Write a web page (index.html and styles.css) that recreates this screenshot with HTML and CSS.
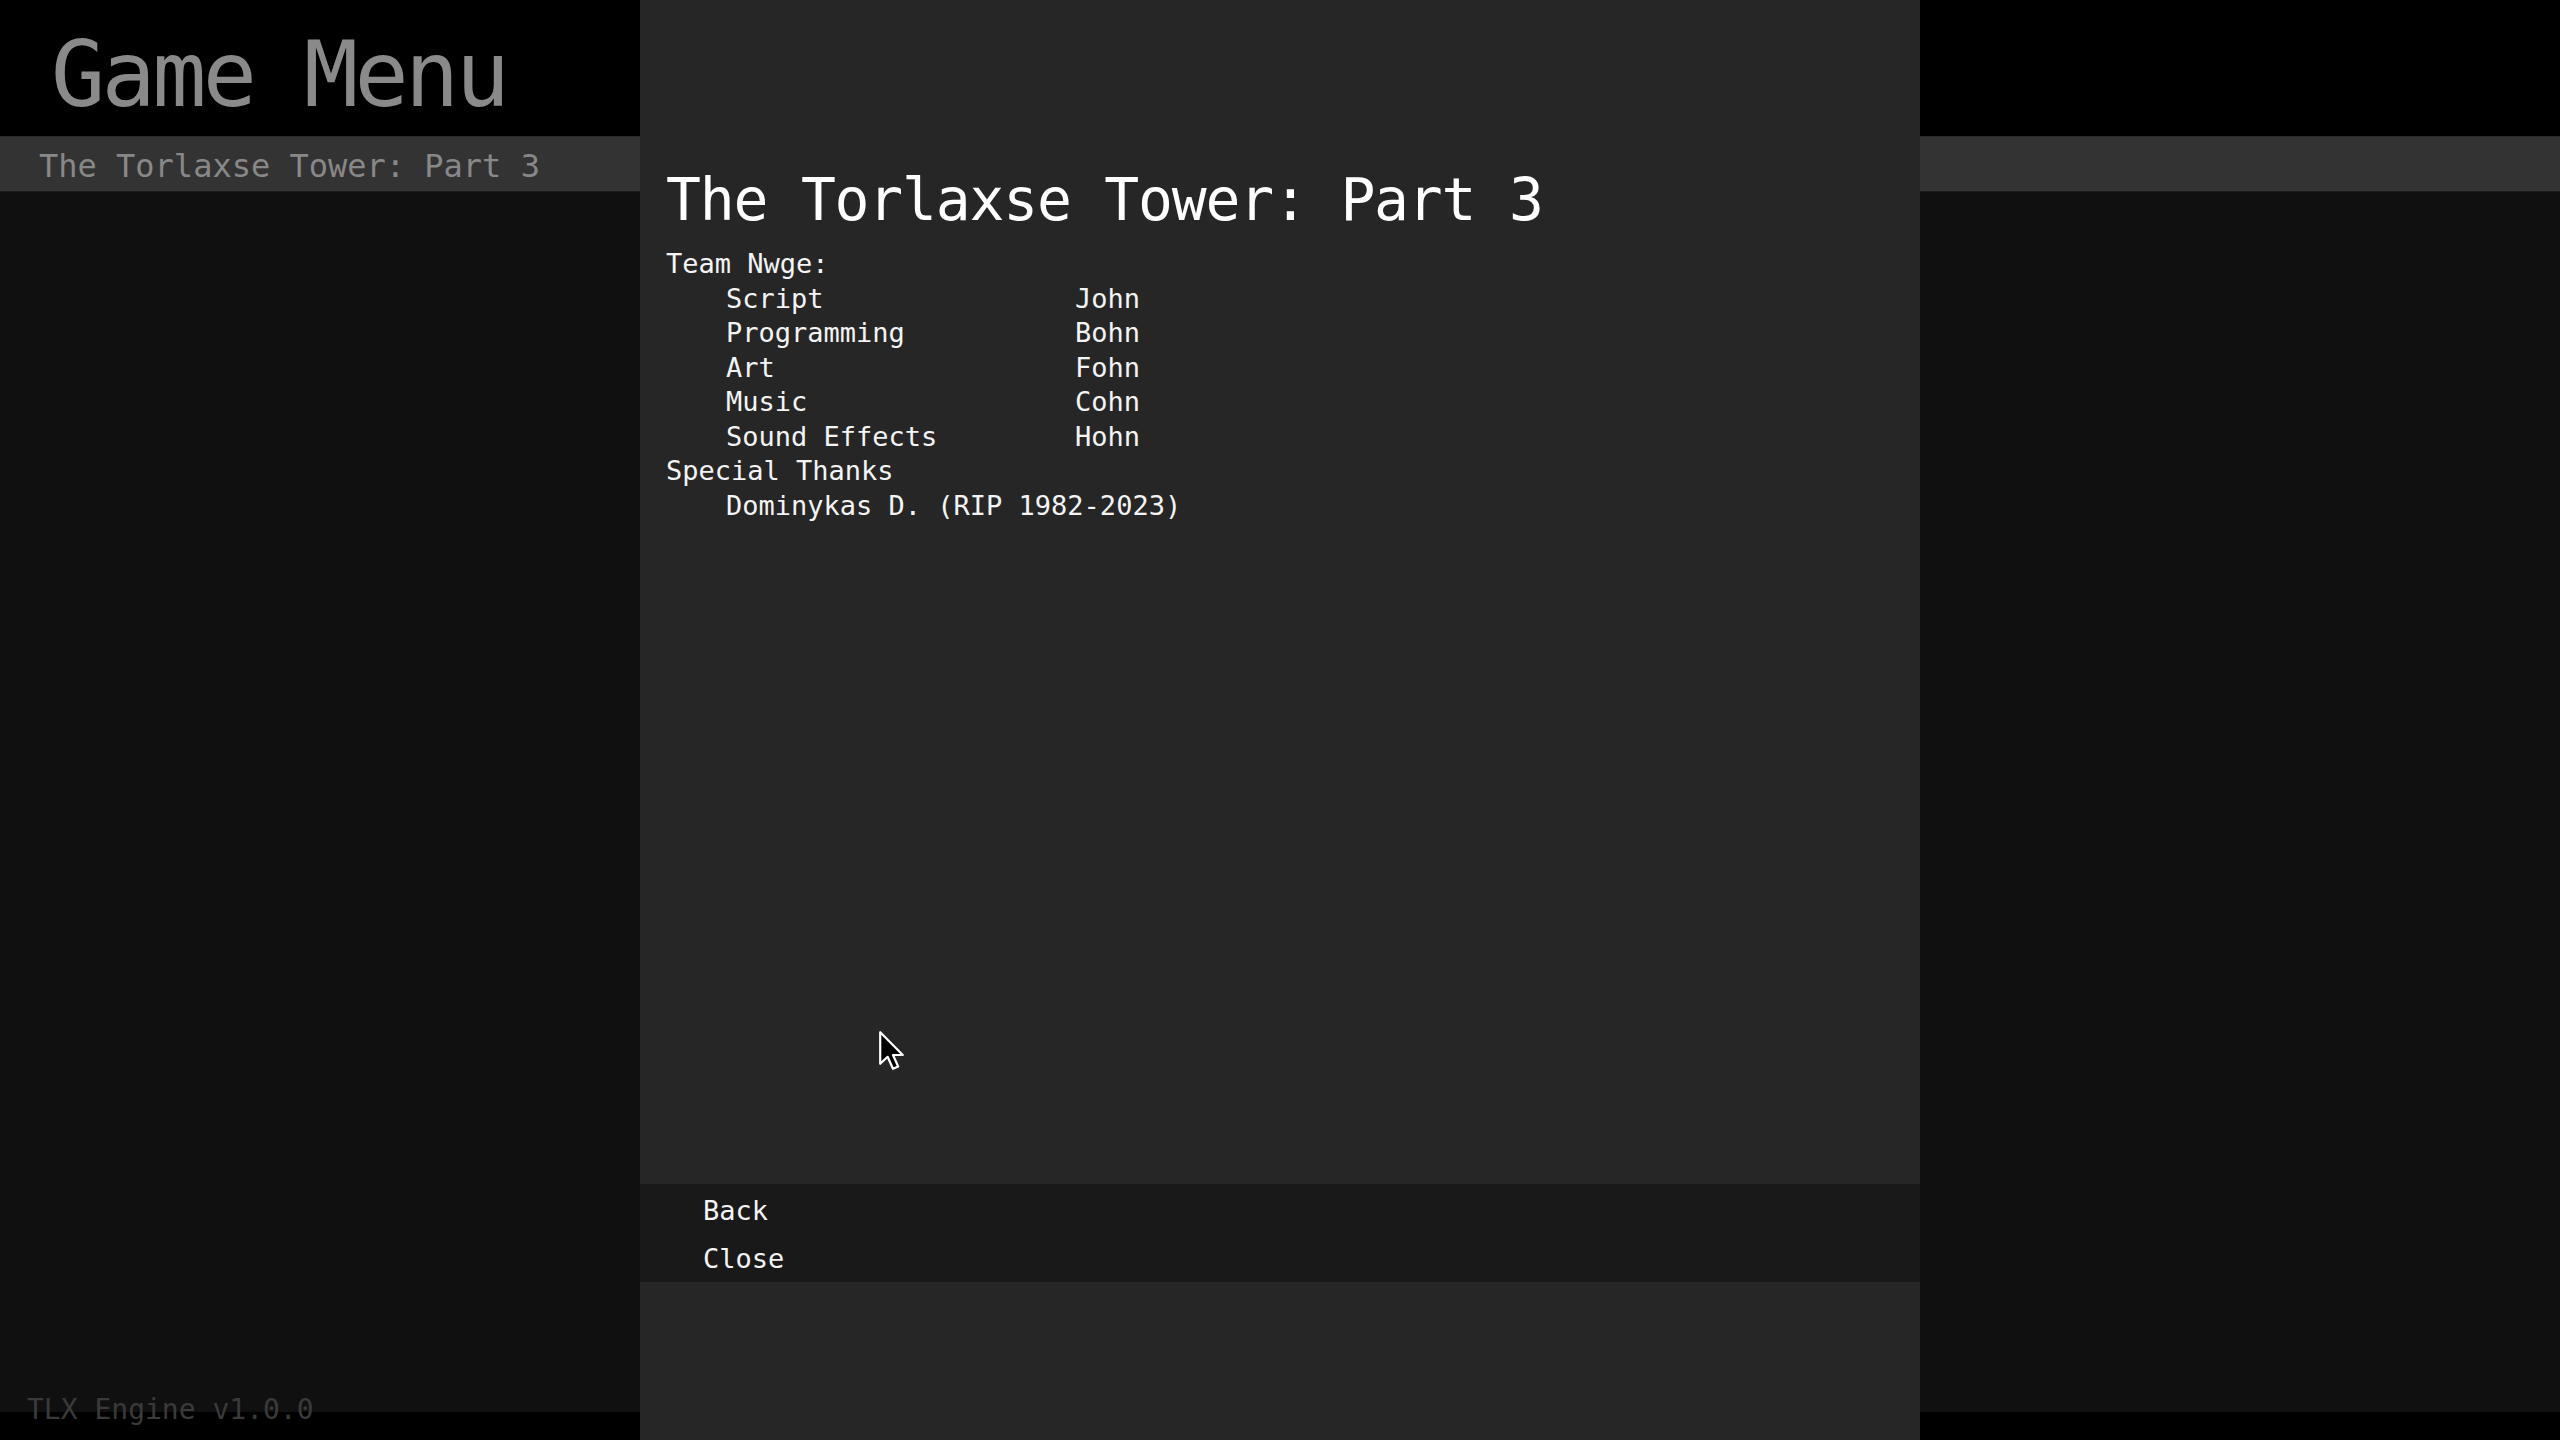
FILE: index.html
```html
<!DOCTYPE html>
<html lang="en">
<head>
<meta charset="utf-8">
<title>Game Menu</title>
<link rel="stylesheet" href="styles.css">
</head>
<body>
<div class="screen">
  <div class="cell head left"><h1 class="game-title">Game Menu</h1></div>
  <div class="cell head right"></div>
  <div class="cell sub left"><div class="subtitle">The Torlaxse Tower: Part 3</div></div>
  <div class="cell sub right"></div>
  <div class="cell main left"></div>
  <div class="cell main right"></div>
  <div class="cell foot left"><div class="engine">TLX Engine v1.0.0</div></div>
  <div class="cell foot right"></div>

  <section class="panel">
    <div class="panel-body">
      <h2 class="credits-title">The Torlaxse Tower: Part 3</h2>
      <div class="credits">
        <div class="group">Team Nwge:</div>
        <div class="row"><span class="role">Script</span><span class="name">John</span></div>
        <div class="row"><span class="role">Programming</span><span class="name">Bohn</span></div>
        <div class="row"><span class="role">Art</span><span class="name">Fohn</span></div>
        <div class="row"><span class="role">Music</span><span class="name">Cohn</span></div>
        <div class="row"><span class="role">Sound Effects</span><span class="name">Hohn</span></div>
        <div class="group">Special Thanks</div>
        <div class="row single">Dominykas D. (RIP 1982-2023)</div>
      </div>
      <svg class="cursor" width="26" height="40" viewBox="0 0 13 20" aria-hidden="true">
        <path d="M0.6 0.6 L0.6 16.4 L4.3 12.9 L7 18.9 L9.6 17.8 L7 12 L11.9 12 Z" fill="#000" stroke="#fff" stroke-width="1.1" stroke-linejoin="round"/>
      </svg>
    </div>
    <nav class="menu">
      <div class="menu-item">Back</div>
      <div class="menu-item">Close</div>
    </nav>
    <div class="panel-foot"></div>
  </section>
</div>
</body>
</html>
```
FILE: styles.css
```css
* { box-sizing: border-box; }

html, body {
  margin: 0;
  padding: 0;
  background: #000;
}

body {
  font-family: "DejaVu Sans Mono", "Liberation Mono", monospace;
  color: #f2f2f2;
  overflow: hidden;
}

.screen {
  width: 2560px;
  height: 1440px;
  display: grid;
  grid-template-columns: 640px 1280px 640px;
  grid-template-rows: 136px 56px 1220px 28px;
}

.cell.left { grid-column: 1; }
.cell.right { grid-column: 3; }

.head { grid-row: 1; background: #000; }
.sub { grid-row: 2; background: #333333; border-top: 1px solid #2a2a2a; border-bottom: 1px solid #1c1c1c; }
.main { grid-row: 3; background: #101010; }
.foot { grid-row: 4; background: #000; }

.game-title {
  margin: 0;
  padding: 30px 0 0 51px;
  font-size: 90px;
  line-height: 90px;
  font-weight: normal;
  letter-spacing: -3.6px;
  color: #8a8a8a;
  white-space: nowrap;
}

.subtitle {
  padding: 3px 0 0 39px;
  font-size: 32px;
  line-height: 52px;
  color: #888888;
  white-space: nowrap;
}

.engine {
  margin-top: -16px;
  padding-left: 27px;
  font-size: 28px;
  line-height: 28px;
  color: #3a3a3a;
  white-space: nowrap;
}

.panel {
  grid-column: 2;
  grid-row: 1 / -1;
  background: #262626;
  display: flex;
  flex-direction: column;
}

.panel-body {
  position: relative;
  height: 1184px;
  padding: 166px 0 0 26px;
}

.credits-title {
  margin: 0 0 13px;
  font-size: 58px;
  line-height: 68px;
  font-weight: normal;
  letter-spacing: -1.2px;
  color: #ffffff;
  white-space: nowrap;
}

.credits {
  font-size: 27px;
  line-height: 34.5px;
  color: #f4f4f4;
}

.group { white-space: nowrap; }

.row {
  display: grid;
  grid-template-columns: 349px auto;
  padding-left: 60px;
  white-space: nowrap;
}

.row.single { display: block; }

.cursor {
  position: absolute;
  left: 239px;
  top: 1031px;
}

.menu {
  height: 98px;
  background: #191919;
  padding: 3px 0 0 63px;
  display: flex;
  flex-direction: column;
}

.menu-item {
  font-size: 27px;
  line-height: 48px;
  color: #f4f4f4;
}

.panel-foot {
  flex: 1;
  background: #262626;
}
```
